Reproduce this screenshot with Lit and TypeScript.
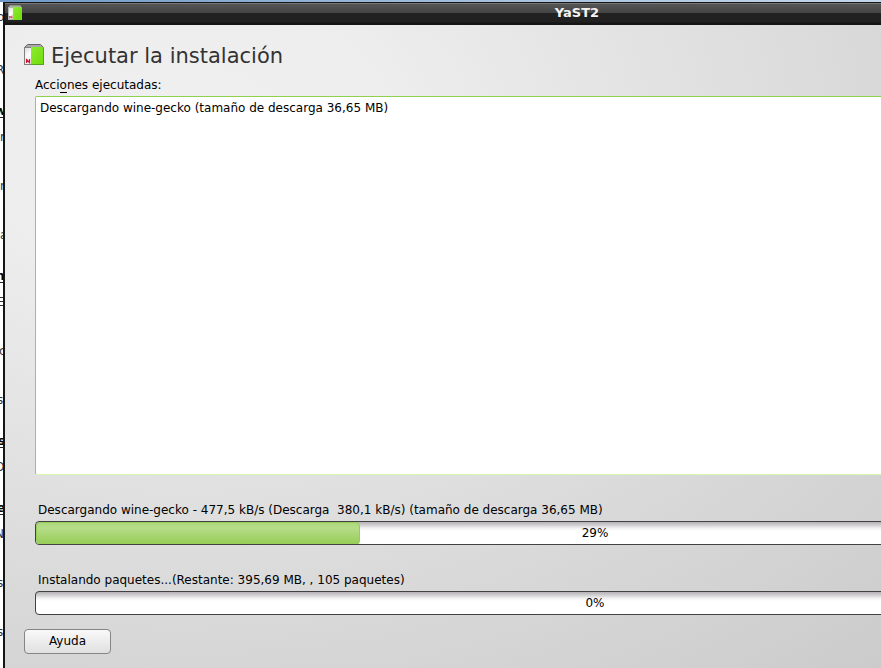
import { LitElement, html, css, svg } from "lit";
import { customElement, property } from "lit/decorators.js";
import { classMap } from "lit/directives/class-map.js";

@customElement("package-icon")
class PackageIcon extends LitElement {
  @property({ type: Boolean }) flat = false;

  static styles = css`
    :host { display: block; }
    svg { display: block; width: 100%; height: 100%; }
  `;

  render() {
    const lid = this.flat
      ? svg`<path d="M0.5 3.5 L2.5 0.5 H17.5 L19.5 3.5 Z" fill="#a3ad9c"/>`
      : svg`<path d="M0.5 3.5 L3.5 0.5 H16.5 L19.5 3.5 Z" fill="#a9a9a9" stroke="#666" stroke-width="1"/>`;
    return html`
      <svg viewBox="0 0 20 21" preserveAspectRatio="none">
        <defs>
          <linearGradient id="w" x1="0" y1="0" x2="1" y2="1">
            <stop offset="0" stop-color="#dcdcdc" /><stop offset=".35" stop-color="#fff" /><stop offset=".7" stop-color="#ddd" />
          </linearGradient>
          <linearGradient id="g" x1="0" y1="0" x2="1" y2="1">
            <stop offset="0" stop-color="#8dec30" /><stop offset="1" stop-color="#6fdc08" />
          </linearGradient>
        </defs>
        ${lid}
        <rect x=".5" y="3.5" width="19" height="17" fill="url(#w)" stroke=${this.flat ? "#b9b9b9" : "#808080"} />
        <rect x="7" y="3" width="12.5" height="17.5" fill="url(#g)" />
        <path d="M7 20.5H19.5V3.5" fill="none" stroke=${this.flat ? "#7ae016" : "#55a51c"} />
        <path d="M2.5 19V15.5L5.5 18.5V15" fill="none" stroke="#d4142a" stroke-width="1.2" />
      </svg>
    `;
  }
}

@customElement("progress-row")
class ProgressRow extends LitElement {
  @property() label = "";
  @property({ type: Number }) value = 0;

  static styles = css`
    :host { display: block; height: 44px; }
    .label { box-sizing: border-box; height: 20px; line-height: 16px; padding: 1px 0 0 3px; white-space: pre; }
    .track {
      box-sizing: border-box; height: 24px; border: 1px solid #444145; border-radius: 4px;
      background: linear-gradient(#b5b1b5 0, #d0ced0 3px, #f0f0f0 6px, #fff 9px);
      display: grid; overflow: hidden;
    }
    .fill, .value { grid-area: 1 / 1; }
    .fill {
      box-sizing: border-box; border: 1px solid #93cf52; border-radius: 4px;
      background: linear-gradient(#aed87c 0, #b6dc89 5px, #98ce5a 20px);
    }
    .value { text-align: center; line-height: 23px; z-index: 1; }
  `;

  render() {
    return html`
      <div class="label">${this.label}</div>
      <div class="track">
        ${this.value > 0 ? html`<div class="fill" style="width:${this.value}%"></div>` : ""}
        <div class="value">${this.value}%</div>
      </div>
    `;
  }
}

interface Entry { text: string; bottom: number; shift: number; heading?: boolean; }

const entries: Entry[] = [
  { text: "o", bottom: 24, shift: -3 },
  { text: "R", bottom: 77, shift: -4 },
  { text: "w", bottom: 118, shift: -5, heading: true },
  { text: "r", bottom: 144, shift: 0 },
  { text: "r", bottom: 193, shift: 0 },
  { text: "a", bottom: 242, shift: 0 },
  { text: "n", bottom: 283, shift: -4, heading: true },
  { text: "E", bottom: 309, shift: -3 },
  { text: "c", bottom: 358, shift: -1 },
  { text: "s", bottom: 407, shift: -3 },
  { text: "s", bottom: 448, shift: -2, heading: true },
  { text: "O", bottom: 474, shift: -5 },
  { text: "e", bottom: 515, shift: -3, heading: true },
  { text: "N", bottom: 541, shift: -5 },
  { text: "s", bottom: 590, shift: -3 },
  { text: "s", bottom: 639, shift: -3 },
];

@customElement("app-root")
class AppRoot extends LitElement {
  static styles = css`
    :host {
      display: flex; flex-direction: column; width: 881px; height: 668px; overflow: hidden;
      font: 12px "DejaVu Sans", sans-serif; color: #000; background: #fff;
    }
    .desktop { flex: none; height: 2px; background: linear-gradient(90deg, #6f9ac8, #a9c3df 60%, #c4d6ea); }
    .screen { flex: 1; display: flex; min-height: 0; }
    .behind { flex: none; width: 3px; overflow: visible; }
    .entry { display: flex; align-items: flex-end; width: 4px; overflow: hidden; line-height: 14px; color: #333; }
    .entry.heading { font-weight: bold; color: #000; box-shadow: inset 0 -1px #222; }
    .window {
      flex: none; box-sizing: border-box; width: 1163px; border-left: 2px solid #151515;
      position: relative; display: flex; flex-direction: column;
    }
    .titlebar {
      flex: none; height: 23px; box-sizing: border-box; display: flex; align-items: flex-start; color: #f4f4f4;
      background: linear-gradient(#151515 0 1px, #777 1px 2px, #555 2px, #444 11px, #212121 11px 20px, #151515 21px);
    }
    .titlebar package-icon { width: 14px; height: 15px; margin: 3px 0 0 3px; }
    .caption { width: 1110px; text-align: center; font-weight: bold; font-size: 13px; line-height: 21px; }
    .content {
      flex: 1; display: flex; flex-direction: column; padding: 18px 6px 0 19px;
      background: radial-gradient(ellipse 1100px 760px at 180px 110px, #f0f0f0, #ededed 20%, #d8d8d8 65%, #c9c9c9);
    }
    .heading-row { display: flex; align-items: flex-start; gap: 7px; height: 24px; }
    .heading-row package-icon { width: 20px; height: 21px; margin-top: 1px; }
    h1 { margin: 1px 0 0; font-size: 21px; line-height: 24px; font-weight: normal; color: #333; }
    .panel { padding-left: 11px; width: 1120px; }
    .label { line-height: 16px; margin-top: 10px; height: 19px; }
    .key { border-bottom: 1px solid #000; display: inline-block; line-height: 13px; }
    .log {
      box-sizing: border-box; height: 379px; padding: 3px 4px; line-height: 16px; background: #fff;
      border: 1px solid #8fd04f; border-bottom-color: #d6f7ae; border-radius: 2px;
    }
    .first, .second { margin-top: 26px; }
    button {
      align-self: flex-start; margin: 14px 0 0; width: 87px; height: 25px; padding: 0 0 1px;
      border: 1px solid #858585; border-radius: 4px; background: linear-gradient(#f9f9f9, #e0e0e0);
      font: inherit; color: #000;
    }
  `;

  render() {
    let previous = 2;
    return html`
      <div class="desktop"></div>
      <div class="screen">
        <div class="behind">
          ${entries.map((entry) => {
            const height = entry.bottom - previous;
            previous = entry.bottom;
            return html`<div
              class=${classMap({ entry: true, heading: !!entry.heading })}
              style="height:${height}px;text-indent:${entry.shift}px"
            >${entry.text}</div>`;
          })}
        </div>
        <div class="window">
          <div class="titlebar"><package-icon .flat=${true}></package-icon><div class="caption">YaST2</div></div>
          <div class="content">
            <div class="heading-row"><package-icon></package-icon><h1>Ejecutar la instalación</h1></div>
            <div class="panel">
              <div class="label">Acci<span class="key">o</span>nes ejecutadas:</div>
              <div class="log">Descargando wine-gecko (tamaño de descarga 36,65 MB)</div>
              <progress-row class="first" .value=${29}
                .label=${"Descargando wine-gecko - 477,5 kB/s (Descarga  380,1 kB/s) (tamaño de descarga 36,65 MB)"}></progress-row>
              <progress-row class="second" .value=${0}
                .label=${"Instalando paquetes...(Restante: 395,69 MB, , 105 paquetes)"}></progress-row>
            </div>
            <button>Ayuda</button>
          </div>
        </div>
      </div>
    `;
  }
}
